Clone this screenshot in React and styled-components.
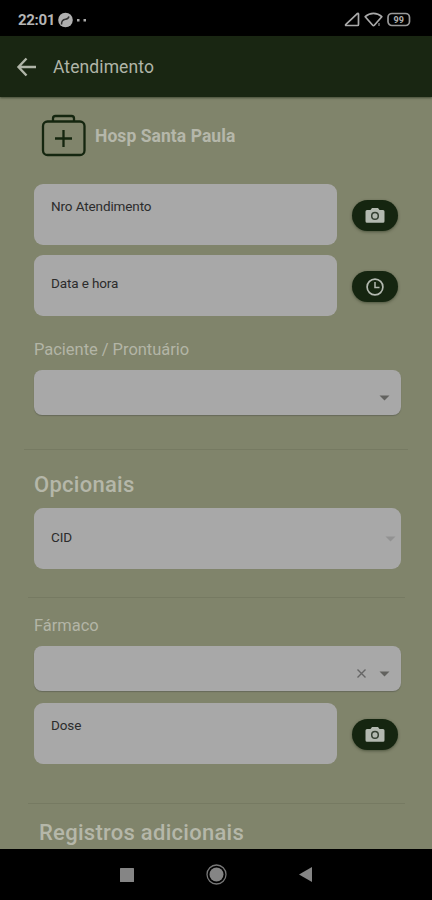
import styled, { createGlobalStyle } from "styled-components";

const GlobalStyle = createGlobalStyle`
  * {
    box-sizing: border-box;
  }
  body {
    margin: 0;
    background: #000;
    font-family: Roboto, "Liberation Sans", sans-serif;
  }
`;

const Screen = styled.div`
  display: flex;
  flex-direction: column;
  width: 432px;
  height: 900px;
  overflow: hidden;
  background: #80846b;
`;

const StatusBar = styled.div`
  display: flex;
  align-items: center;
  flex: 0 0 36px;
  padding: 3px 21px 0 18px;
  background: #000;
  color: #b5b5b5;
`;

const Time = styled.span`
  width: 37px;
  font-size: 15px;
  font-weight: 700;
  letter-spacing: -0.3px;
  white-space: nowrap;
`;

const StatusIcons = styled.div`
  display: flex;
  gap: 4px;
  margin-left: auto;
`;

const Header = styled.header`
  display: flex;
  align-items: center;
  flex: 0 0 61px;
  gap: 15px;
  padding-left: 16px;
  background: #192612;
  color: #b0b5a8;
  box-shadow: 0 1px 2px rgba(25, 38, 18, 0.6);
`;

const HeaderTitle = styled.h1`
  margin: 0;
  font-size: 17.5px;
  font-weight: 400;
  letter-spacing: 0.1px;
`;

const Content = styled.main`
  flex: 1;
  min-height: 0;
  padding: 17px 31px 0 34px;
  overflow: hidden;
`;

const Hospital = styled.div`
  display: flex;
  align-items: center;
  gap: 9px;
  height: 43px;
  margin: 0 0 27px 7px;
`;

const HospitalName = styled.span`
  color: #b5b7aa;
  font-size: 17.5px;
  font-weight: 700;
  letter-spacing: 0.06px;
`;

const Row = styled.div`
  display: flex;
  gap: 15px;
  margin-top: ${(props) => props.$top || 0}px;
  margin-bottom: ${(props) => props.$gap || 0}px;
`;

const Field = styled.div`
  flex: 0 0 ${(props) => (props.$full ? 367 : 303)}px;
  display: flex;
  align-items: center;
  justify-content: space-between;
  height: 61px;
  padding: 0 5px ${(props) => (props.$raised ? 18 : props.$full ? 3 : 5)}px 17px;
  border-radius: 9px;
  background: #a8a8a8;
  color: #2c2c2c;
  font-size: 13.5px;
  letter-spacing: -0.12px;

  svg {
    margin-top: 4px;
  }
`;

const Select = styled.div`
  display: flex;
  align-items: center;
  justify-content: flex-end;
  gap: 12px;
  height: 45px;
  padding: 11px 11px 0 0;
  border-radius: 8px;
  background: #a8a8a8;
  box-shadow: 0 1px 1px rgba(65, 67, 65, 0.4);
`;

const RoundButton = styled.button`
  display: flex;
  align-items: center;
  justify-content: center;
  width: 46px;
  height: 31px;
  margin-top: 16px;
  padding: 0;
  border: 0;
  border-radius: 16px;
  background: #152510;
  color: #b3b9b0;
  box-shadow: 0 1px 3px rgba(25, 38, 18, 0.5);
`;

const Label = styled.div`
  height: ${(props) => props.$height}px;
  padding-top: ${(props) => props.$top || 0}px;
  color: #b3b5a6;
  font-size: 16.5px;
  line-height: 22px;
  letter-spacing: -0.03px;
`;

const Heading = styled.h2`
  height: 36px;
  margin: 0 0 0 ${(props) => props.$indent || 0}px;
  color: #b5b7a9;
  font-size: 22px;
  font-weight: 500;
  line-height: 26px;
  letter-spacing: 0.27px;
`;

const Divider = styled.hr`
  height: 1px;
  margin: ${(props) => props.$margin};
  border: 0;
  background: #767a62;
`;

const NavBar = styled.nav`
  display: flex;
  align-items: center;
  justify-content: space-between;
  flex: 0 0 51px;
  padding: 0 120px 0 120px;
  background: #000;
`;

const Camera = () => (
  <svg width="20" height="17" viewBox="0 0 20 17">
    <path
      d="M7 1h6l1.5 2H18a1.5 1.5 0 0 1 1.5 1.5v9.7a1.5 1.5 0 0 1-1.5 1.5H2a1.5 1.5 0 0 1-1.5-1.5V4.500A1.500 1.500 0 0 1 2 3h3.500z"
      fill="currentColor"
    />
    <circle cx="10" cy="8.900" r="3.300" fill="none" stroke="#354032" strokeWidth="1.500" />
  </svg>
);

const Clock = () => (
  <svg width="20" height="20" viewBox="0 0 20 20" fill="none" stroke="currentColor">
    <circle cx="10" cy="10" r="7.900" strokeWidth="1.700" />
    <path d="M10 5v5.500h4.500" strokeWidth="1.500" />
  </svg>
);

const Arrow = ({ color = "#62625f" }) => (
  <svg width="11" height="6" viewBox="0 0 11 6">
    <path d="M0.500 0.500h10l-5 5z" fill={color} />
  </svg>
);

const Clear = () => (
  <svg width="11" height="12" viewBox="0 0 11 12" stroke="#666" strokeWidth="1.400">
    <path d="M1.500 1.500l8 8M9.500 1.500l-8 8" />
  </svg>
);

function App() {
  return (
    <>
      <GlobalStyle />
      <Screen>
        <StatusBar>
          <Time>22:01</Time>
          <svg width="38" height="16" viewBox="0 0 38 16">
            <circle cx="10.500" cy="8" r="7.300" fill="#b0b0b0" />
            <path d="M6.500 12.500c0-3.500 1.500-5 4-5.200 2-.2 3-1 3.500-2.800" fill="none" stroke="#333" strokeWidth="1.500" />
            <rect x="22" y="7" width="2.500" height="2.500" fill="#aaa" />
            <rect x="28.500" y="7" width="2.500" height="2.500" fill="#aaa" />
          </svg>
          <StatusIcons>
            <svg width="16" height="15" viewBox="0 0 16 15" fill="none" stroke="#aaa" strokeWidth="1.700">
              <path d="M14.500 2v10.500a1 1 0 0 1-1 1H2.300c-.8 0-1-.6-.4-1.100L13 1.800c.8-.6 1.500-.5 1.500.2z" />
            </svg>
            <svg width="19" height="15" viewBox="0 0 19 15" fill="none" stroke="#aaa" strokeWidth="1.700">
              <path d="M1.200 4.700C6 .2 13 .2 17.800 4.700l-7.500 8.600c-.5.600-1.100.6-1.600 0z" strokeLinejoin="round" />
              <path d="M15 11v3" stroke="#666" />
            </svg>
            <svg width="24" height="15" viewBox="0 0 24 15">
              <rect x="1" y="1.500" width="21.500" height="12" rx="4" fill="none" stroke="#999" strokeWidth="1.700" />
              <text x="11.700" y="10.800" fill="#b0b0b0" fontSize="9" fontWeight="700" textAnchor="middle">
                99
              </text>
            </svg>
          </StatusIcons>
        </StatusBar>

        <Header>
          <svg width="22" height="20" viewBox="0 0 22 20" fill="none" stroke="currentColor" strokeWidth="2.400">
            <path d="M10.500 1.500L2.500 10l8 8.500M2.500 10H20" />
          </svg>
          <HeaderTitle>Atendimento</HeaderTitle>
        </Header>

        <Content>
          <Hospital>
            <svg width="45" height="43" viewBox="0 0 45 43" fill="none" stroke="#14260f" strokeWidth="2.300">
              <rect x="2" y="7.500" width="41.500" height="33.500" rx="4.500" />
              <path d="M12 7V4.500a2.500 2.500 0 0 1 2.500-2.500h16a2.500 2.500 0 0 1 2.500 2.500V7" />
              <path d="M22.500 16v17M14 24.500h17" />
            </svg>
            <HospitalName>Hosp Santa Paula</HospitalName>
          </Hospital>

          <Row $gap={10}>
            <Field $raised>Nro Atendimento</Field>
            <RoundButton>
              <Camera />
            </RoundButton>
          </Row>
          <Row $gap={22}>
            <Field>Data e hora</Field>
            <RoundButton>
              <Clock />
            </RoundButton>
          </Row>

          <Label $height={32} $top={1}>Paciente / Prontuário</Label>
          <Select>
            <Arrow />
          </Select>

          <Divider $margin="34px -7px 22px -10px" />

          <Heading>Opcionais</Heading>
          <Field $full>
            CID
            <Arrow color="#929292" />
          </Field>

          <Divider $margin="28px -4px 17px -6px" />

          <Label $height={31}>Fármaco</Label>
          <Select>
            <Clear />
            <Arrow />
          </Select>
          <Row $top={12}>
            <Field $raised>Dose</Field>
            <RoundButton>
              <Camera />
            </RoundButton>
          </Row>

          <Divider $margin="39px -4px 16px -6px" />

          <Heading $indent={5}>Registros adicionais</Heading>
        </Content>

        <NavBar>
          <svg width="14" height="14" viewBox="0 0 14 14">
            <rect width="14" height="14" rx="0.500" fill="#858585" />
          </svg>
          <svg width="21" height="21" viewBox="0 0 21 21">
            <circle cx="10.500" cy="10.500" r="9.500" fill="none" stroke="#777" strokeWidth="1.300" />
            <circle cx="10.500" cy="10.500" r="7" fill="#858585" />
          </svg>
          <svg width="13" height="15" viewBox="0 0 13 15">
            <path d="M13 0v15L0 7.500z" fill="#858585" />
          </svg>
        </NavBar>
      </Screen>
    </>
  );
}

export default App;
